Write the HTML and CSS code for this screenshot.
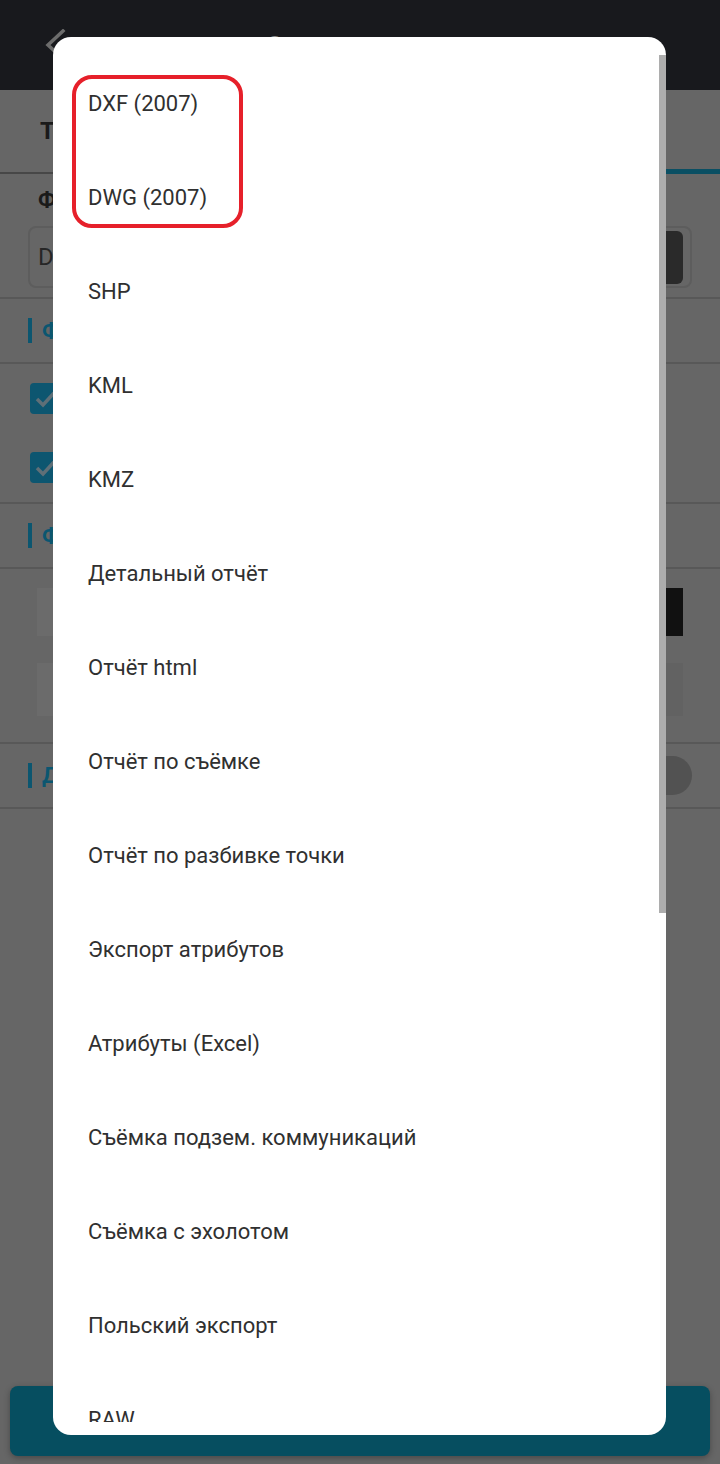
FILE: index.html
```html
<!DOCTYPE html>
<html lang="ru">
<head>
<meta charset="utf-8">
<title>Экспорт</title>
<link rel="stylesheet" href="styles.css">
</head>
<body>
<div class="app">
  <header class="topbar">
    <svg class="back" width="32" height="32" viewBox="0 0 32 32"><path d="M23 2 L8 16 L23 30" fill="none" stroke="#6c6c6c" stroke-width="3.5" stroke-linecap="square"/></svg>
    <div class="title">Экспорт данных</div>
  </header>
  <nav class="tabs">
    <div class="tab">Точки</div>
    <div class="tab active">Файл</div>
  </nav>
  <section class="format">
    <div class="label">Формат файла</div>
    <div class="select">
      <span class="select-text">DXF (2007)</span>
      <span class="select-btn"></span>
    </div>
  </section>
  <div class="section-head"><span class="bar"></span><span class="head-text">Фильтр данных</span></div>
  <div class="checks">
    <div class="check-row"><span class="checkbox"><svg width="30" height="31" viewBox="0 0 30 31"><path d="M7 16 L13 22 L24 10" fill="none" stroke="#5f6f77" stroke-width="3.5"/></svg></span></div>
    <div class="check-row"><span class="checkbox"><svg width="30" height="31" viewBox="0 0 30 31"><path d="M7 16 L13 22 L24 10" fill="none" stroke="#5f6f77" stroke-width="3.5"/></svg></span></div>
  </div>
  <div class="section-head"><span class="bar"></span><span class="head-text">Формат координат</span></div>
  <div class="segments">
    <div class="seg-row first"><span class="seg"></span><span class="seg"></span><span class="seg sel"></span></div>
    <div class="seg-row second"><span class="seg"></span><span class="seg"></span><span class="seg dim"></span></div>
  </div>
  <div class="section-head toggle-head"><span class="bar"></span><span class="head-text">Дополнительно</span><span class="toggle"></span></div>
  <div class="spacer"></div>
  <div class="primary">Экспорт</div>
</div>

<div class="dialog">
  <ul class="list">
    <li>DXF (2007)</li>
    <li>DWG (2007)</li>
    <li>SHP</li>
    <li>KML</li>
    <li>KMZ</li>
    <li>Детальный отчёт</li>
    <li>Отчёт html</li>
    <li>Отчёт по съёмке</li>
    <li>Отчёт по разбивке точки</li>
    <li>Экспорт атрибутов</li>
    <li>Атрибуты (Excel)</li>
    <li>Съёмка подзем. коммуникаций</li>
    <li>Съёмка с эхолотом</li>
    <li>Польский экспорт</li>
    <li>RAW</li>
    <li>CSV</li>
  </ul>
  <div class="scroll-thumb"></div>
</div>
<div class="highlight"></div>
</body>
</html>
```
FILE: styles.css
```css
* { box-sizing: border-box; }
html, body { margin: 0; padding: 0; }
body {
  width: 720px;
  height: 1464px;
  overflow: hidden;
  position: relative;
  font-family: Roboto, "Noto Sans", sans-serif;
  background: #666666;
}
.app {
  height: 1464px;
  display: flex;
  flex-direction: column;
  background: #666666;
}
.topbar {
  height: 90px;
  flex: none;
  background: #18191d;
  display: flex;
  align-items: center;
  padding-left: 40px;
}
.back { flex: none; }
.title {
  flex: 1;
  text-align: center;
  font-size: 24px;
  font-weight: 500;
  color: #8a8a8a;
  margin-right: 72px;
}
.tabs {
  height: 84px;
  flex: none;
  display: flex;
}
.tab {
  flex: 1;
  display: flex;
  align-items: center;
  padding-left: 40px;
  font-size: 24px;
  font-weight: 700;
  color: #1a1a1a;
  border-bottom: 2px solid #474747;
}
.tab.active {
  border-bottom: 5px solid #0a4f63;
  color: #0a4f63;
}
.format {
  flex: none;
  padding: 13px 28px 9px;
  border-bottom: 2px solid #585858;
}
.label {
  font-size: 22px;
  line-height: 26px;
  font-weight: 700;
  color: #1a1a1a;
  padding-left: 10px;
  margin-bottom: 13px;
}
.select {
  height: 62px;
  border: 2px solid #5d5d5d;
  border-radius: 8px;
  display: flex;
  align-items: center;
  padding: 0 7px 0 8px;
}
.select-text {
  flex: 1;
  font-size: 24px;
  color: #262626;
}
.select-btn {
  width: 50px;
  height: 53px;
  border-radius: 6px;
  background: #2a2a2a;
}
.section-head {
  flex: none;
  height: 65px;
  display: flex;
  align-items: center;
  padding-left: 28px;
  border-bottom: 2px solid #585858;
}
.bar {
  width: 4px;
  height: 25px;
  background: #0b5670;
}
.head-text {
  margin-left: 10px;
  font-size: 22px;
  font-weight: 700;
  color: #0b5670;
  flex: 1;
}
.checks {
  flex: none;
  border-bottom: 2px solid #585858;
}
.check-row {
  height: 69px;
  display: flex;
  align-items: center;
  padding-left: 30px;
}
.checkbox {
  width: 30px;
  height: 31px;
  border-radius: 4px;
  background: #0d5670;
  display: flex;
}
.segments {
  flex: none;
  padding: 19px 37px 26px;
  display: flex;
  flex-direction: column;
  gap: 27px;
  border-bottom: 2px solid #585858;
}
.seg-row {
  display: flex;
}
.seg-row.first { height: 48px; }
.seg-row.second { height: 53px; }
.seg {
  flex: 1;
  background: #6b6b6b;
}
.seg.sel {
  flex: none;
  width: 60px;
  background: #111111;
}
.seg.dim {
  flex: none;
  width: 60px;
  background: #626262;
}
.toggle-head { padding-right: 28px; }
.toggle {
  width: 64px;
  height: 39px;
  border-radius: 20px;
  background: #525252;
}
.spacer { flex: 1; }
.primary {
  flex: none;
  height: 70px;
  margin: 0 10px 8px;
  border-radius: 8px;
  background: #064e60;
  box-shadow: 0 2px 6px rgba(0, 0, 0, 0.3);
  display: flex;
  align-items: center;
  justify-content: center;
  font-size: 22px;
  font-weight: 500;
  color: #7a9aa3;
}
.dialog {
  position: absolute;
  left: 53px;
  top: 37px;
  width: 613px;
  height: 1398px;
  background: #ffffff;
  border-radius: 18px;
  padding: 19px 0 13px;
  overflow: hidden;
}
.list {
  list-style: none;
  margin: 0;
  padding: 0;
  height: 1366px;
  overflow: hidden;
}
.list li {
  height: 94px;
  display: flex;
  align-items: center;
  padding-left: 35px;
  font-size: 22px;
  color: #303030;
}
.scroll-thumb {
  position: absolute;
  right: 0;
  top: 18px;
  width: 7px;
  height: 858px;
  background: #adadad;
}
.highlight {
  position: absolute;
  left: 72px;
  top: 75px;
  width: 171px;
  height: 153px;
  border: 4px solid #e6202a;
  border-radius: 20px;
}
```
